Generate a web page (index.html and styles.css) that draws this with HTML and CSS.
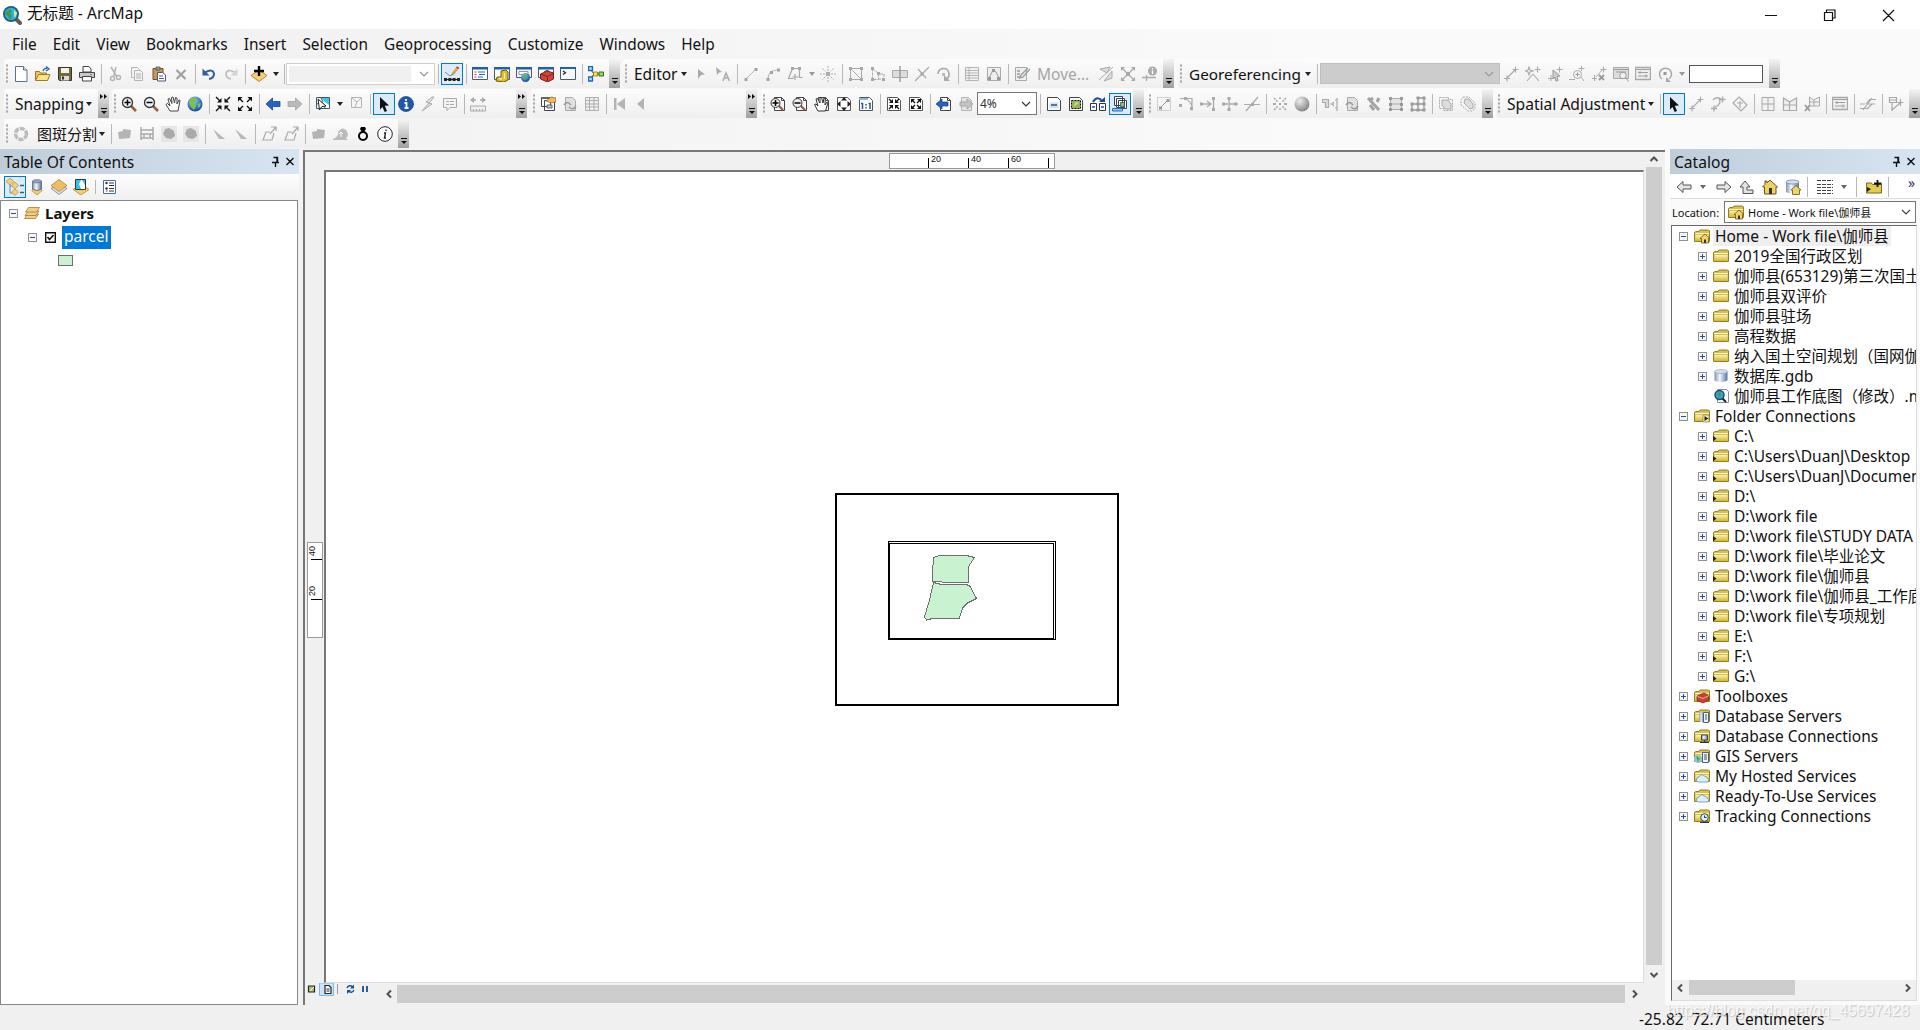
FILE: index.html
```html
<!DOCTYPE html>
<html lang="zh-CN">

<head>
  <meta charset="UTF-8">
  <meta name="viewport" content="width=device-width, initial-scale=1.0">
  <title>无标题 - ArcMap</title>
  <link rel="stylesheet" href="styles.css">
</head>

<body>

  <!-- Icon sprite -->
  <svg class="sprite" xmlns="http://www.w3.org/2000/svg">
    <defs>
      <linearGradient id="gold" x1="0" y1="0" x2="0" y2="1"><stop offset="0" stop-color="#fbf3a8"/><stop offset="1" stop-color="#d3b53c"/></linearGradient>
      <linearGradient id="cyl" x1="0" y1="0" x2="1" y2="0"><stop offset="0" stop-color="#7c93b8"/><stop offset=".4" stop-color="#f4f7fb"/><stop offset="1" stop-color="#5a76a5"/></linearGradient>
      <radialGradient id="ball" cx=".4" cy=".3" r=".7"><stop offset="0" stop-color="#8fd4ff"/><stop offset="1" stop-color="#0d4a9c"/></radialGradient>
      <radialGradient id="greyball" cx=".35" cy=".3" r=".7"><stop offset="0" stop-color="#eee"/><stop offset="1" stop-color="#888"/></radialGradient>
    </defs>

    <!-- Standard -->
    <symbol id="app" viewBox="0 0 20 20"><path d="M12 12l6 6" stroke="#6d5a50" stroke-width="4" stroke-linecap="round"/><circle cx="9" cy="9" r="8" fill="#1d5d82"/><circle cx="9" cy="9" r="6.2" fill="#2fb2dc"/><path d="M5 6l4-2 1 3-2 1 2 3-2 4-2-4-3-2z" fill="#47944a"/><path d="M12 5l3 3-2 5-1-3z" fill="#eadf9a"/></symbol>
    <symbol id="new" viewBox="0 0 16 16"><path d="M2.500.5h8l3.500 3.500v11.500H2.500z" fill="#fff" stroke="#5d7186"/><path d="M10.500.5V4H14" fill="#d8e4f0" stroke="#5d7186"/></symbol>
    <symbol id="open" viewBox="0 0 16 16"><path d="M.5 14V5.500h4l1 1.500h6v2" fill="#e9c75a" stroke="#a07a20"/><path d="M.5 14.500l3-6H15l-2.500 6z" fill="#fbe48c" stroke="#a07a20"/><path d="M8 5q1-3 4-2.500M11 .5l3 2.500-3 2" fill="none" stroke="#2a60b0" stroke-width="1.300"/></symbol>
    <symbol id="save" viewBox="0 0 16 16"><path d="M1.500 1.500h13v13h-12l-1-1z" fill="#756a3b" stroke="#3b3620"/><path d="M4 2h8v5H4z" fill="#f3f3ee"/><path d="M4 10h8v4.500H4z" fill="#ddd"/><path d="M5 10.500h2v3H5z" fill="#333"/></symbol>
    <symbol id="print" viewBox="0 0 16 16"><path d="M4 6V.5h6l2 2.500v3z" fill="#fff" stroke="#444"/><path d="M.5 6.500h15v5H.5z" fill="#c9c9c9" stroke="#444"/><path d="M3.500 10.500h9v4.500h-9z" fill="#fff" stroke="#444"/><path d="M11 8.500h2" stroke="#5a5"/></symbol>
    <symbol id="cut" viewBox="0 0 16 16"><g fill="none" stroke="#b4b4b4" stroke-width="1.500"><path d="M4 1l6 10M9 1l-2.500 10"/><circle cx="5.500" cy="12.500" r="2"/><circle cx="11.500" cy="11.500" r="2"/></g></symbol>
    <symbol id="copy" viewBox="0 0 16 16"><path d="M2.500 1.500h6l2 2v8h-8z" fill="#f4f4f4" stroke="#b4b4b4"/><path d="M5.500 4.500h6l2 2v8h-8zM7 8h5M7 10h5M7 12h5" fill="#f4f4f4" stroke="#b4b4b4"/></symbol>
    <symbol id="paste" viewBox="0 0 16 16"><path d="M2 2.500h10v11H2z" fill="#c8965a" stroke="#70502c"/><path d="M5 1h4v3H5z" fill="#999" stroke="#555" stroke-width=".8"/><path d="M6.500 6.500h5l3 2.500v6h-8zM8 10h4M8 12.500h5" fill="#fff" stroke="#4a5c78"/></symbol>
    <symbol id="delete" viewBox="0 0 16 16"><path d="M3.500 4l9 9M12.500 4l-9 9" stroke="#a0a0a0" stroke-width="2.200"/></symbol>
    <symbol id="undo" viewBox="0 0 16 16"><path d="M4 6.500Q12 2 13 8q0 4-5 5" fill="none" stroke="#2b5f9e" stroke-width="2"/><path d="M1.500 2.500v7h7z" fill="#2b5f9e"/></symbol>
    <symbol id="redo" viewBox="0 0 16 16"><path d="M12 6.500Q4 2 3 8q0 4 5 5" fill="none" stroke="#bdbdbd" stroke-width="1.600"/><path d="M14.500 2.500v7h-7z" fill="#d3d3d3"/></symbol>
    <symbol id="add" viewBox="0 0 16 16"><path d="M8 4l8 5.500L8 15.500 0 9.500z" fill="#f6cf70" stroke="#b78a30"/><path d="M8 0v10M3 5h10" stroke="#000" stroke-width="2.400"/></symbol>
    <symbol id="sketch" viewBox="0 0 16 16"><path d="M1 6l5 4 3-2" fill="none" stroke="#888"/><path d="M7.500 9L8.500 7l4.500-6 1.500 1-4.500 6z" fill="#f2b83c" stroke="#a06a20" stroke-width=".6"/><path d="M13 .2l2.300 1.600-1 1.400-2.300-1.700z" fill="#d34a3c"/><path d="M1 13.500h14" stroke="#222"/><path d="M0 12h3v3H0zM4.300 12h3v3h-3zM8.600 12h3v3h-3zM13 12h3v3h-3z" fill="#222"/></symbol>
    <symbol id="wtoc" viewBox="0 0 16 16"><path d="M.5 1.500h15v12H.5z" fill="#fff" stroke="#4a5a70"/><path d="M0 1h16v2.500H0z" fill="#1f5fb4"/><path d="M2.500 6h2M2.500 8.500h2M2.500 11h2" stroke="#d33"/><path d="M6 6h7M7 8.500h6M6 11h5" stroke="#1d70c8" stroke-width="1.200"/></symbol>
    <symbol id="wcat" viewBox="0 0 16 16"><path d="M.5 1.500h15v12H.5z" fill="#fff" stroke="#4a5a70"/><path d="M0 1h16v2.500H0z" fill="#1f5fb4"/><path d="M7 5l5-1 2 2v8l-4 2-8-1 1-4h4z" fill="#dcbc30" stroke="#6f5b12"/><path d="M10.500 7v6M5 12.500l3 .5" stroke="#fff2a0" stroke-width="1.300"/></symbol>
    <symbol id="wsearch" viewBox="0 0 16 16"><path d="M.5 1.500h15v10H.5z" fill="#f4f4f4" stroke="#4a5a70"/><path d="M0 1h16v2.500H0z" fill="#1f5fb4"/><path d="M3 5.500h9v3H3z" fill="#fff" stroke="#999"/><circle cx="9.500" cy="11.500" r="4.500" fill="url(#ball)"/><path d="M8 8l3 2-2 4-2-3z" fill="#5fb04c"/></symbol>
    <symbol id="wtool" viewBox="0 0 16 16"><path d="M.5 1.500h15v10H.5z" fill="#fff" stroke="#4a5a70"/><path d="M0 1h16v2.500H0z" fill="#1f5fb4"/><path d="M2.500 8l7-3 6 2v6l-6 3-7-3z" fill="#cf4538" stroke="#7c1f18"/><path d="M3 8l6.500 2.500L15 7.500M9.500 10.500V15" fill="none" stroke="#8a1f18"/><path d="M6 6q2-2.500 5-1" fill="none" stroke="#444"/></symbol>
    <symbol id="wpy" viewBox="0 0 16 16"><path d="M.5 1.500h15v12H.5z" fill="#f7fafd" stroke="#4a5a70"/><path d="M0 1h16v2H0z" fill="#1f5fb4"/><path d="M3 5l2.500 1.800L3 8.500" fill="none" stroke="#222" stroke-width="1.200"/></symbol>
    <symbol id="model" viewBox="0 0 16 16"><path d="M3 4l3 4-3 4M8 8h4" fill="none" stroke="#333"/><path d="M.5.5h4v4h-4zM.5 11h4v4h-4z" fill="#a6dcff" stroke="#1b6ab8" stroke-width="1.300"/><path d="M5.500 6h4v4h-4z" fill="#ffe04a" stroke="#8a7a10" stroke-width=".8"/><path d="M11 6h4.500v4H11z" fill="#9ad46a" stroke="#2c6e18"/></symbol>

    <!-- Editor, greyed out -->
    <symbol id="garrow" viewBox="0 0 16 16"><path d="M5 3l7 5.500-4 .5-3 4z" fill="#ababab"/></symbol>
    <symbol id="garrowa" viewBox="0 0 16 16"><path d="M1 1l6 5-3 .5L2 9z" fill="#ababab"/><path d="M8 15l3-8 3.500 8M9 12h4.500" fill="none" stroke="#ababab" stroke-width="1.500"/></symbol>
    <symbol id="gline" viewBox="0 0 16 16"><path d="M3 13L13 3" stroke="#b4b4b4"/><path d="M1.500 12h3v3h-3zM11.500 2h3v3h-3z" fill="#a4a4a4"/></symbol>
    <symbol id="garc" viewBox="0 0 16 16"><path d="M3 13q0-9 10-9" fill="none" stroke="#b4b4b4"/><path d="M1.500 12h3v3h-3zM12 2.500h3v3h-3zM5 5h3v3H5z" fill="#a4a4a4"/></symbol>
    <symbol id="gtrace" viewBox="0 0 16 16"><path d="M5.500 2.500h7v9h3M5.500 2.500l-4 10h5M8 8v6M5.500 11h6" fill="none" stroke="#a8a8a8" stroke-width="1.200"/><path d="M4 1h3v3H4zM11 1h3v3h-3z" fill="#a8a8a8"/></symbol>
    <symbol id="gpoint" viewBox="0 0 16 16"><path d="M8 0v5M8 11v5M0 8h5M11 8h5M2.500 2.500l3 3M10.500 10.500l3 3M13.500 2.500l-3 3M5.500 10.500l-3 3" stroke="#b0b0b0" stroke-dasharray="2 1"/><path d="M6 6h4v4H6z" fill="#aaa"/></symbol>
    <symbol id="gverts" viewBox="0 0 16 16"><path d="M2.500 2.500h11v11h-11zM2.500 2.500l11 11" fill="none" stroke="#aaa"/><path d="M1 1h3v3H1zM12 1h3v3h-3zM1 12h3v3H1zM12 12h3v3h-3z" fill="#a8a8a8"/></symbol>
    <symbol id="greshape" viewBox="0 0 16 16"><path d="M2.500 2.500v11h6M2.500 2.500l6 5v6M8 13h6V8H8" fill="none" stroke="#aaa" stroke-dasharray="3 1"/><path d="M1 1h3v3H1zM7 6h3v3H7zM1 12h3v3H1zM12 12h3v3h-3z" fill="#a8a8a8"/></symbol>
    <symbol id="gcutp" viewBox="0 0 16 16"><path d="M.5 4.500h15v7H.5z" fill="#ddd" stroke="#aaa"/><path d="M8 0v16" stroke="#999" stroke-width="1.400"/></symbol>
    <symbol id="gsplit" viewBox="0 0 16 16"><path d="M1 15L15 1M4 3l8 9" stroke="#aaa" stroke-width="1.200"/><path d="M6.500 6.500h3v3h-3z" fill="#a8a8a8"/></symbol>
    <symbol id="grotate" viewBox="0 0 16 16"><path d="M2 8a5.500 5.500 0 1 1 8 5" fill="none" stroke="#aaa" stroke-width="1.600"/><path d="M8 9v6h6z" fill="#aaa"/><path d="M6 7h3v3H6z" fill="#bbb"/></symbol>
    <symbol id="gtable" viewBox="0 0 16 16"><path d="M1.500 1.500h13v13h-13zM2 4.500h12M2 7h12M2 9.500h12M2 12h12M5 2v12" fill="#f3f3f3" stroke="#b4b4b4"/></symbol>
    <symbol id="gprop" viewBox="0 0 16 16"><path d="M1.500 1.500h13v13h-13z" fill="#eee" stroke="#aaa"/><path d="M3 12l4-8 3 2 3 6" fill="none" stroke="#999"/><path d="M6 3h3v3H6zM2 11h3v3H2zM11 11h3v3h-3z" fill="#999"/></symbol>
    <symbol id="gform" viewBox="0 0 16 16"><path d="M1.500 1.500h11v13h-11z" fill="#eee" stroke="#aaa"/><path d="M3 5h3M3 8h3M3 11h3M7 9l7-7M7 9l-1 3 3-1 7-8" fill="none" stroke="#999" stroke-width="1.300"/></symbol>
    <symbol id="gmap" viewBox="0 0 16 16"><path d="M2 3l10-2-3 6zM6 15l8-3V5zM1 14L15 1" fill="#ddd" stroke="#aaa"/></symbol>
    <symbol id="gexp" viewBox="0 0 16 16"><path d="M2 2l12 12M14 2L2 14" stroke="#aaa" stroke-width="1.300"/><path d="M1 1h4L1 5zM15 1h-4l4 4zM1 15h4l-4-4zM15 15h-4l4-4zM6 6h4v4H6z" fill="#a8a8a8"/></symbol>
    <symbol id="gpin" viewBox="0 0 16 16"><circle cx="10.500" cy="5" r="4.500" fill="#aaa"/><path d="M10.500 2v1.500M10.500 4.500V8" stroke="#fff" stroke-width="1.400"/><path d="M0 11.500h14M4.500 9v6" stroke="#aaa" stroke-width="1.300"/></symbol>
    <symbol id="glink" viewBox="0 0 16 16"><path d="M3 13L13 3M1 12.500h6M4 9.500v6M9.500 3.500h6M12.500.5v6" stroke="#aaa" stroke-width="1.100"/></symbol>
    <symbol id="gwand" viewBox="0 0 16 16"><path d="M2 15l6-7M8 8l6 7M9.500 3.500h6M12.500.5v6M4 1l1 3 3 1-3 1-1 3-1-3-3-1 3-1z" fill="none" stroke="#aaa" stroke-width="1.100"/></symbol>
    <symbol id="gsel" viewBox="0 0 16 16"><path d="M1 12.500h5M4 9v6M9.500 3.500h6M12.500.5v6" stroke="#aaa"/><path d="M6 4l7 6-3 .5 1 4-2 .5-1.500-4L6 13z" fill="#ccc" stroke="#999"/></symbol>
    <symbol id="gzlink" viewBox="0 0 16 16"><path d="M0 13.500h6M9.500 2.500h6M12.500 0v5M12 11l3 4" stroke="#aaa"/><circle cx="8.500" cy="8.500" r="4" fill="#f4f4f4" stroke="#aaa"/><path d="M6.500 8.500h4M8.500 6.500v4" stroke="#999"/></symbol>
    <symbol id="gdlink" viewBox="0 0 16 16"><path d="M1 12.500h5M3.500 9v6M5 11l7-8M9.500 3.500h6M12.500.5v6" stroke="#aaa"/><path d="M8 9l5 5M13 9l-5 5" stroke="#999" stroke-width="1.800"/></symbol>
    <symbol id="gwin" viewBox="0 0 16 16"><path d="M.5 1.500h15v12H.5z" fill="#eee" stroke="#a8a8a8" stroke-width="1.300"/><path d="M1 3.500h14M3 6.500h10M3 10h10M5 5v3M11 8.500v3" stroke="#a0a0a0"/></symbol>
    <symbol id="gwinz" viewBox="0 0 16 16"><path d="M.5 1.500h15v11H.5z" fill="#ddd" stroke="#a8a8a8"/><path d="M1 3.500h14M3 6h10M13 12l2.500 3.500" stroke="#999"/><circle cx="10" cy="9.500" r="3.300" fill="#eee" stroke="#999"/></symbol>
    <symbol id="grot2" viewBox="0 0 16 16"><path d="M5 13A6 6 0 1 1 12 13" fill="none" stroke="#a8a8a8" stroke-width="1.500"/><path d="M9 11v5h5z" fill="#a8a8a8"/><path d="M6.500 6h3v3h-3z" fill="#999"/></symbol>

    <!-- Tools -->
    <symbol id="zin" viewBox="0 0 16 16"><path d="M10 10l5 5" stroke="#9c5f3a" stroke-width="2.600"/><circle cx="6.500" cy="6.500" r="5" fill="#eef4fa" stroke="#333" stroke-width="1.300"/><path d="M3.500 6.500h6M6.500 3.500v6" stroke="#000" stroke-width="1.500"/></symbol>
    <symbol id="zout" viewBox="0 0 16 16"><path d="M10 10l5 5" stroke="#9c5f3a" stroke-width="2.600"/><circle cx="6.500" cy="6.500" r="5" fill="#eef4fa" stroke="#333" stroke-width="1.300"/><path d="M3.500 6.500h6" stroke="#000" stroke-width="1.500"/></symbol>
    <symbol id="pan" viewBox="0 0 16 16"><path d="M5 15L1 8.500l1.500-1L5 10 3 3l1.500-.5L7 7.500 6.500 1.500 8 1l1.500 6L10.500 1.500 12 2v6l2-4 1 .5L13 15z" fill="#fff" stroke="#444"/></symbol>
    <symbol id="globe" viewBox="0 0 16 16"><circle cx="8" cy="8" r="7.500" fill="url(#ball)"/><path d="M4 2l5-.5 1 3L7 7l2 3-2 4-3-3-2-4zM11 8l3-1-1 4-2 1z" fill="#7fc04a"/></symbol>
    <symbol id="fixin" viewBox="0 0 16 16"><g stroke="#111" stroke-width="1.400"><path d="M1 1l4 4M15 1l-4 4M1 15l4-4M15 15l-4-4"/></g><path d="M6.500 2v4.500H2zM9.500 2v4.500H14zM6.500 14V9.500H2zM9.500 14V9.500H14z" fill="#111"/></symbol>
    <symbol id="fixout" viewBox="0 0 16 16"><g stroke="#111" stroke-width="1.400"><path d="M2 2l4 4M14 2l-4 4M2 14l4-4M14 14l-4-4"/></g><path d="M1 1h4.500L1 5.500zM15 1h-4.500L15 5.500zM1 15h4.500L1 10.500zM15 15h-4.500l4.500-4.500z" fill="#111"/></symbol>
    <symbol id="back" viewBox="0 0 16 16"><path d="M1 8l6.500-6v3.500H15v5H7.500V14z" fill="#2563c0" stroke="#1a468a" stroke-width=".8"/></symbol>
    <symbol id="fwd" viewBox="0 0 16 16"><path d="M15 8L8.500 2v3.500H1v5h7.500V14z" fill="#b9b9b9" stroke="#a4a4a4" stroke-width=".8"/></symbol>
    <symbol id="selfeat" viewBox="0 0 16 16"><path d="M1.500 1.500h13v11h-13z" fill="#fff" stroke="#456"/><path d="M6 2h8v7l-4-3z" fill="#35c8e8"/><path d="M2 8l5-2 3 6M6 2l2 4" fill="none" stroke="#456"/><path d="M3 3l8 7-4 .5L4.500 14z" fill="#fff" stroke="#222"/></symbol>
    <symbol id="clearsel" viewBox="0 0 16 16"><path d="M3.500 1.500h10v10h-10zM4 2l5 4 4-4M9 6l-2 5" fill="#f6f6f6" stroke="#b4b4b4"/></symbol>
    <symbol id="ptr" viewBox="0 0 16 16"><path d="M4 1l9 8.500-4.200.3L11 15l-2.300 1L6.500 11 4 13.500z" fill="#111"/></symbol>
    <symbol id="info" viewBox="0 0 16 16"><circle cx="8" cy="8" r="7.500" fill="#1e58b0" stroke="#143f84" stroke-width=".7"/><path d="M8 3v2M6.500 7H8.500v5M6.500 12h4" stroke="#fff" stroke-width="1.800" fill="none"/></symbol>
    <symbol id="gbolt" viewBox="0 0 16 16"><path d="M12 1L6 6l3 1-7 8 10-7-3-1 5-6z" fill="#e4e4e4" stroke="#aaa"/></symbol>
    <symbol id="gpopup" viewBox="0 0 16 16"><path d="M1.500 2.500h13v9H8l-3 3v-3H1.500zM4 5.500h3M4 8.500h3M8 5.500h4M8 8.500h4" fill="#f4f4f4" stroke="#aaa"/></symbol>
    <symbol id="gmeasure" viewBox="0 0 16 16"><path d="M1 4h5M10 4h5" stroke="#aaa" stroke-width="1.500"/><path d="M4 1L0 4l4 3zM12 1l4 3-4 3z" fill="#aaa"/><path d="M.5 10h15v5H.5zM3.500 15v-2M6.500 15v-2M9.500 15v-2M12.500 15v-2" fill="#eee" stroke="#aaa"/></symbol>
    <symbol id="addctl" viewBox="0 0 16 16"><path d="M1.500 1.500h9v9h-9zM4.500 4.500h10v10h-10z" fill="#fff" stroke="#444"/><path d="M1 1h9v2H1z" fill="#666"/><path d="M6 5l5-4 5 1v4l-5 1z" fill="#f0b860" stroke="#8b6120" stroke-width=".7"/><path d="M7 9h5v3H7z" fill="#b8c8d8" stroke="#567"/></symbol>
    <symbol id="gdoc2" viewBox="0 0 16 16"><path d="M3.500 1.500h7l3 3v10h-10z" fill="#e0e0e0" stroke="#aaa"/><path d="M2 9q3-5 7 0M14 10q-3 5-7 1" fill="none" stroke="#999" stroke-width="1.500"/></symbol>
    <symbol id="ggrid" viewBox="0 0 16 16"><path d="M1.500 1.500h13v13h-13zM2 4.500h12M2 8h12M2 11h12M5.500 2v12M10 2v12" fill="#eee" stroke="#b0b0b0"/></symbol>
    <symbol id="gfirst" viewBox="0 0 16 16"><path d="M2 2h2.500v12H2zM13 2v12L5 8z" fill="#b4b4b4"/></symbol>
    <symbol id="gprev" viewBox="0 0 16 16"><path d="M10 2v12L3 8z" fill="#b4b4b4"/></symbol>

    <!-- Layout -->
    <symbol id="page" viewBox="0 0 16 16"><path d="M4.500 1.500h7l3 3v10h-10z" fill="#fff" stroke="#444"/><path d="M11.500 1.500v3h3" fill="none" stroke="#444"/></symbol>
    <symbol id="pzin" viewBox="0 0 16 16"><use href="#page"/><path d="M8 9l5 5" stroke="#9c5f3a" stroke-width="2.400"/><circle cx="5.500" cy="7" r="4.500" fill="#eee" stroke="#333"/><path d="M2.500 7h6M5.500 4v6" stroke="#000" stroke-width="1.500"/></symbol>
    <symbol id="pzout" viewBox="0 0 16 16"><use href="#page"/><path d="M8 9l5 5" stroke="#9c5f3a" stroke-width="2.400"/><circle cx="5.500" cy="7" r="4.500" fill="#eee" stroke="#333"/><path d="M2.500 7h6" stroke="#000" stroke-width="1.500"/></symbol>
    <symbol id="ppan" viewBox="0 0 16 16"><use href="#page"/><path d="M4 15L.5 8.500 2 8l2 2-2-7 1.500-.5L6 7V1.500h1.500L9 7l1-5 1.300.5L11 9l2-3 1 .5L11.500 15z" fill="#fff" stroke="#333"/></symbol>
    <symbol id="pfull" viewBox="0 0 16 16"><path d="M1.500 1.500h10l3 3v10h-13z" fill="#fff" stroke="#555"/><path d="M8 1l3 3.500H5zM8 15l3-3.500H5zM1 8l3.500-3v6zM15 8l-3.500-3v6z" fill="#222"/></symbol>
    <symbol id="pone" viewBox="0 0 16 16"><path d="M1.500 1.500h10l3 3v10h-13z" fill="#fff" stroke="#555"/><path d="M1 2h9v2H1z" fill="#8bb8df"/><path d="M3 7.500h1.500V13M12 13V7.500h-1.500M8 8v1.500M8 11v1.500" fill="none" stroke="#1f5791" stroke-width="1.500"/></symbol>
    <symbol id="pfin" viewBox="0 0 16 16"><path d="M1.500 1.500h10l3 3v10h-13z" fill="#fff" stroke="#555"/><path d="M7 3v4H3zM9 3v4h4zM7 13V9H3zM9 13V9h4z" fill="#111"/><path d="M3 3l3 3M13 3l-3 3M3 13l3-3M13 13l-3-3" stroke="#111" stroke-width="1.300"/></symbol>
    <symbol id="pfout" viewBox="0 0 16 16"><path d="M1.500 1.500h10l3 3v10h-13z" fill="#fff" stroke="#555"/><path d="M3 3h4L3 7zM13 3H9l4 4zM3 13h4L3 9zM13 13H9l4-4z" fill="#111"/><path d="M4 4l3 3M12 4L9 7M4 12l3-3M12 12L9 9" stroke="#111" stroke-width="1.300"/></symbol>
    <symbol id="pback" viewBox="0 0 16 16"><use href="#page"/><path d="M0 8l6-5v3h6v4H6v3z" fill="#2563c0" stroke="#173f7c" stroke-width=".7"/></symbol>
    <symbol id="pfwd" viewBox="0 0 16 16"><path d="M3.500 1.500h7l3 3v10h-10z" fill="#e4e4e4" stroke="#b4b4b4"/><path d="M15 8L9 3v3H2v4h7v3z" fill="#c4c4c4" stroke="#aaa"/></symbol>
    <symbol id="ptog" viewBox="0 0 16 16"><path d="M1.500 1.500h10l3 3v10h-13z" fill="#fff" stroke="#444"/><path d="M3.500 6.500h9v6h-9z" fill="#cfe2f4"/><path d="M5 9h6" stroke="#236" stroke-width="1.300"/></symbol>
    <symbol id="pfocus" viewBox="0 0 16 16"><path d="M1.500 1.500h10l3 3v10h-13z" fill="#fff" stroke="#444"/><path d="M3.500 4.500h9v8h-9z" fill="#8fb65a" stroke="#111" stroke-dasharray="2 1"/><path d="M5 11l3-5 3 1z" fill="#e8d67c"/></symbol>
    <symbol id="pchange" viewBox="0 0 16 16"><path d="M.5 7.500h6v7h-6zM9.500 7.500h6v7h-6z" fill="#fff" stroke="#333"/><path d="M2 10h3v2H2zM11 10h3v2h-3z" fill="#4a80bd"/><path d="M3 6q4-7 9-1" fill="none" stroke="#1d4f90" stroke-width="2"/><path d="M9 6h6V1z" fill="#1d4f90"/></symbol>
    <symbol id="pddp" viewBox="0 0 16 16"><path d="M2.500.5h8v9h-8zM4.500 2.500h8v9h-8zM6.500 4.500h8v8h-8z" fill="#fff" stroke="#345"/><path d="M8.500 6.500h4v4h-4z" fill="#8bbf6a" stroke="#345" stroke-width=".7"/><path d="M.5 12.500h10v2.500H.5z" fill="#8fc0ee" stroke="#2a6fc0"/></symbol>

    <!-- Advanced editing and spatial adjustment -->
    <symbol id="gcopyf" viewBox="0 0 16 16"><path d="M1.500 1.500h13v13h-13z" fill="none" stroke="#aaa" stroke-dasharray="1 1"/><path d="M4 12l8-8" stroke="#999"/><path d="M3 10.500h3v3H3zM10.500 3h3v3h-3z" fill="#999"/></symbol>
    <symbol id="gfillet" viewBox="0 0 16 16"><path d="M2 2.500h12v12M7 2.500q6 3 7 8" fill="none" stroke="#aaa" stroke-width="1.200"/><path d="M1 8h3v3H1zM6 1h3v3H6zM12 11h3v3h-3z" fill="#aaa"/></symbol>
    <symbol id="gextend" viewBox="0 0 16 16"><path d="M1 8h9M13.500 1v14M7 5l4 3-4 3" fill="none" stroke="#aaa" stroke-width="1.300"/><path d="M0 6.500h3v3H0zM12 1h3v3h-3zM12 12h3v3h-3z" fill="#aaa"/></symbol>
    <symbol id="gtrim" viewBox="0 0 16 16"><path d="M0 8h6M7 1v14M7 8h9" fill="none" stroke="#aaa" stroke-width="1.300"/><path d="M0 6.500h3v3H0zM5.500 1h3v3h-3zM5.500 12h3v3h-3zM12 6.500h3v3h-3z" fill="#aaa"/></symbol>
    <symbol id="gint" viewBox="0 0 16 16"><path d="M2 15L14 1M0 8.500h16" stroke="#aaa" stroke-width="1.200"/><path d="M7 7h3v3H7z" fill="#aaa"/></symbol>
    <symbol id="gexplode" viewBox="0 0 16 16"><path d="M2 2l4 4M14 2l-4 4M2 14l4-4M14 14l-4-4M8 1v3M8 12v3" stroke="#aaa" stroke-width="1.500" stroke-dasharray="2 1"/><path d="M7 7h2v2H7zM1 7h3v2H1zM12 7h3v2h-3z" fill="#aaa"/></symbol>
    <symbol id="gball" viewBox="0 0 16 16"><circle cx="8" cy="8" r="7.500" fill="url(#greyball)"/></symbol>
    <symbol id="gcon" viewBox="0 0 16 16"><path d="M.5 3.500h6v8h-3v-5h-3zM8 8h3M13 4h2M13 12h2M15 2v13M12 6L10 8l2 2" fill="#ddd" stroke="#aaa" stroke-width="1.200"/></symbol>
    <symbol id="gtools" viewBox="0 0 16 16"><path d="M2 2l11 12M13 2l-2 4M3 5l4-3M4 9l4 5" stroke="#a4a4a4" stroke-width="3"/></symbol>
    <symbol id="gbox" viewBox="0 0 16 16"><path d="M2.500 2.500h11v11h-11zM2 8h12" fill="#e4e4e4" stroke="#aaa"/><path d="M1 1h3v3H1zM12 1h3v3h-3zM1 7h3v3H1zM12 7h3v3h-3zM1 12h3v3H1zM12 12h3v3h-3z" fill="#999"/></symbol>
    <symbol id="gnodes" viewBox="0 0 16 16"><path d="M8 2h6v12H2V8h12M8 2v12" fill="none" stroke="#999" stroke-width="1.300"/><path d="M6.500.5h3v3h-3zM12.500.5h3v3h-3zM.5 6.500h3v3h-3zM6.500 6.500h3v3h-3zM12.500 6.500h3v3h-3zM.5 12.500h3v3h-3zM6.500 12.500h3v3h-3zM12.500 12.500h3v3h-3z" fill="#999"/></symbol>
    <symbol id="gunion" viewBox="0 0 16 16"><path d="M1.500 1.500h9v2h4v11h-9v-2h-4z" fill="none" stroke="#aaa" stroke-dasharray="2 1"/><path d="M4 4h6l3 4v5H7L4 9z" fill="#ddd" stroke="#aaa"/></symbol>
    <symbol id="gclip" viewBox="0 0 16 16"><path d="M3 1h6l6 6v6l-3 2H8L1 9V4z" fill="none" stroke="#aaa" stroke-dasharray="2 1"/><path d="M5 3h4l4 5v4l-3 1-6-6z" fill="#ddd" stroke="#aaa"/></symbol>
    <symbol id="gmulti" viewBox="0 0 16 16"><path d="M1 12.500h6M4 9.500v6M5 11q7-3 4-8M9.500 3.500h6M12.500.5v6M3 4q3-4 8-1" fill="none" stroke="#aaa" stroke-width="1.300"/></symbol>
    <symbol id="gdiam" viewBox="0 0 16 16"><path d="M7 1l8 8-6 6-8-8zM5 7h6M8 5v7" fill="none" stroke="#aaa" stroke-width="1.200"/></symbol>
    <symbol id="gcells" viewBox="0 0 16 16"><path d="M2 1.500h12v13H2zM2 8h12M8 2v12" fill="#f0f0f0" stroke="#aaa"/></symbol>
    <symbol id="gcells2" viewBox="0 0 16 16"><path d="M1.500 2l6 4 7-4v12.500h-13zM1.500 9h13M7.500 6v8" fill="#f0f0f0" stroke="#aaa" stroke-width="1.200"/></symbol>
    <symbol id="gcells3" viewBox="0 0 16 16"><path d="M5.500 1l4 3 6-3v9h-10zM5.500 6h10M10 4v6" fill="#f0f0f0" stroke="#aaa"/><path d="M1 9l5 6M6 9l-5 6" stroke="#999" stroke-width="1.800"/></symbol>
    <symbol id="gedge" viewBox="0 0 16 16"><path d="M9 3.500h7M0 8h5M8 8h7M0 12.500h7M3 14l9-12M6 8l4-5M7 13l5-5" stroke="#aaa" stroke-width="1.200"/></symbol>
    <symbol id="gattr" viewBox="0 0 16 16"><path d="M1.500 1.500h7v5h-7zM2 4h6M4 7v8M4 14l8-7M9.500 6.500h6M12.500 3v7" fill="none" stroke="#aaa" stroke-width="1.200"/></symbol>

    <!-- Parcel split add-in -->
    <symbol id="gring" viewBox="0 0 16 16"><circle cx="8" cy="8" r="5.500" fill="none" stroke="#bdbdbd" stroke-width="3.500" stroke-dasharray="5 1"/></symbol>
    <symbol id="gpoly" viewBox="0 0 16 16"><path d="M1 6l5-1V3l8 1-1 8-11 1z" fill="#b4b4b4"/></symbol>
    <symbol id="gladder" viewBox="0 0 16 16"><path d="M2 1v13M14 1v13M2 4h12M2 8h12M2 12h12M5 8v4M11 8v4" stroke="#aaa" stroke-width="1.500"/></symbol>
    <symbol id="gblob" viewBox="0 0 16 16"><path d="M0 0h16v16H0z" fill="#e6e6e6"/><path d="M8 2l5 3 1 5-4 3-5-1-3-4 2-5z" fill="#aaa"/></symbol>
    <symbol id="gtri" viewBox="0 0 16 16"><path d="M2 3l12 10H8z" fill="#b8b8b8"/></symbol>
    <symbol id="gpenp" viewBox="0 0 16 16"><path d="M9 6H5l-3 8h9l2-7M9 8l6-7M10 1h5v4" fill="none" stroke="#aaa" stroke-width="1.200"/></symbol>
    <symbol id="gleaf" viewBox="0 0 16 16"><path d="M0 13q6-2 5-7 4-6 8-2 4 5 0 8l2 2H0z" fill="#bbb"/><path d="M8 11V6l-2 2M8 6l2 2" stroke="#fff" fill="none"/></symbol>
    <symbol id="kring" viewBox="0 0 16 16"><circle cx="8" cy="10" r="4" fill="none" stroke="#000" stroke-width="2"/><path d="M6 1h4l1 2-2 3H7L5 3z" fill="#000"/></symbol>
    <symbol id="kinfo" viewBox="0 0 16 16"><circle cx="8" cy="8" r="7.300" fill="#fff" stroke="#223"/><path d="M9 3.500v1.500M7 7h1.500L7.500 12H9" stroke="#223" stroke-width="1.400" fill="none"/></symbol>

    <!-- Table of contents -->
    <symbol id="tlist" viewBox="0 0 18 18"><path d="M4 4v11h6M4 8h5" fill="none" stroke="#789"/><path d="M4 0l4 3.500L4 7 0 3.500zM9 4l3.500 3.500L9 11 5.500 7.500zM9 11l3.500 3L9 17.500 5.500 14z" fill="#f2cd7c" stroke="#c39840" stroke-width=".8"/><path d="M14 7.500h4M14 14.500h4" stroke="#1d62a8" stroke-width="1.500"/></symbol>
    <symbol id="tsrc" viewBox="0 0 16 18"><path d="M8 8l6 5-6 5-6-5z" fill="#f2cd6c" stroke="#b68a30" stroke-width=".8"/><path d="M3 2.500v9q5 3 10 0v-9z" fill="url(#cyl)" stroke="#667"/><ellipse cx="8" cy="2.500" rx="5" ry="2" fill="#8ea2bf" stroke="#667" stroke-width=".6"/></symbol>
    <symbol id="tvis" viewBox="0 0 16 16"><path d="M0 9.500l8 6 8-6-8-5z" fill="#ddd" stroke="#777" stroke-width=".7"/><path d="M8 .5l8 6-8 6-8-6z" fill="#eebe62" stroke="#a97b28" stroke-width=".7"/></symbol>
    <symbol id="tsel" viewBox="0 0 16 16"><path d="M8 5l8 5.500-8 5.500-8-5.500z" fill="#f2cd6c" stroke="#b68a30" stroke-width=".8"/><path d="M2.500.5h10v10h-10z" fill="#fff" stroke="#333"/><path d="M3 1h5L6 5l2 5H3zM12 1v5L9 1z" fill="#30c4e6"/></symbol>
    <symbol id="topt" viewBox="0 0 16 16"><path d="M2.500 1.500h12v13h-12z" fill="#fff" stroke="#456f9e"/><circle cx="5.500" cy="4" r="1.200" fill="#333"/><circle cx="5.500" cy="9.500" r="1.200" fill="#333"/><path d="M8 4h5M8 6.500h5M8 9.500h5M8 12h5M5 12h1.500" stroke="#333"/></symbol>
    <symbol id="layers" viewBox="0 0 16 14"><g fill="#f0cf86" stroke="#a87a30" stroke-width=".8"><path d="M.5 12.500l3-4.500h11l-3 4.500z"/><path d="M1 9.500L4 5h11l-3 4.500z"/><path d="M1.500 6l3-4.500h11L12.500 6z"/></g></symbol>

    <!-- Catalog -->
    <symbol id="folder" viewBox="0 0 16 14"><path d="M.5 12.500V3.500l1.500-1h3l1-1.500h8.500l1 1v10.500z" fill="#d8bf54" stroke="#94801f"/><path d="M1.500 6h13v6h-13z" fill="url(#gold)"/><path d="M1 4.500h14" stroke="#fdf8cc"/></symbol>
    <symbol id="fconn" viewBox="0 0 16 14"><use href="#folder"/><path d="M0 7l3.500 2.500L0 12.500z" fill="#222"/></symbol>
    <symbol id="froot" viewBox="0 0 16 14"><use href="#folder"/><path d="M9 6h6v7H9z" fill="#f7f3cf" stroke="#887722" stroke-width=".7"/><path d="M10.500 7l4 2.500-4 2.500z" fill="#222"/></symbol>
    <symbol id="fhome" viewBox="0 0 16 14"><use href="#folder"/><path d="M6 9.500l5-4.500 5 4.500h-1.500V14h-7V9.500z" fill="#f0d468" stroke="#6a5614" stroke-width=".8"/><path d="M10 10.500h2V14h-2z" fill="#333"/></symbol>
    <symbol id="ftool" viewBox="0 0 16 14"><use href="#folder"/><path d="M3 7l7-3 5 2.500v4.500l-6 3-6-2.500z" fill="#cb4034" stroke="#7c1f18" stroke-width=".7"/><path d="M3.500 7.500L9 9.500l6-3" fill="none" stroke="#f2b0a6"/></symbol>
    <symbol id="fserv" viewBox="0 0 16 14"><use href="#folder"/><path d="M5.500 4h4v9h-4z" fill="url(#cyl)"/><path d="M9.500 3.500h5v10h-5z" fill="#f2f6fa" stroke="#4a5f80"/><path d="M11 6h2M11 8h2M11 10h2" stroke="#357"/></symbol>
    <symbol id="fdbc" viewBox="0 0 16 14"><use href="#folder"/><path d="M7.500 6h6v5h-6z" fill="url(#cyl)" stroke="#445"/><path d="M6 13.500h9M10.500 11v2.500" stroke="#334"/></symbol>
    <symbol id="fgis" viewBox="0 0 16 14"><use href="#folder"/><path d="M8.500 3.500h6v10h-6z" fill="#f2f6fa" stroke="#4a5f80"/><path d="M10 6h3M10 8h3M10 10h3" stroke="#357"/><circle cx="4" cy="10" r="4" fill="#8ec8c8"/><path d="M2 7l4 2-2 4z" fill="#5aa04a"/></symbol>
    <symbol id="fcloud" viewBox="0 0 16 14"><use href="#folder"/><path d="M4 13q-3-1-1-4 1-1 2-1 2-4 5-1 3 0 3 2 3 1 1 4z" fill="#dcedfb" stroke="#6b8db4" stroke-width=".8"/></symbol>
    <symbol id="ftrack" viewBox="0 0 16 14"><use href="#folder"/><circle cx="10.500" cy="8.500" r="3.800" fill="#dcedfb" stroke="#345"/><path d="M10.500 6.500v2h2M6 13.500h9" stroke="#234" fill="none"/></symbol>
    <symbol id="gdb" viewBox="0 0 16 14"><path d="M1.500 2.500v9q6 3.500 13 0v-9z" fill="url(#cyl)"/><ellipse cx="8" cy="2.500" rx="6.500" ry="2" fill="#d5deea" stroke="#8a9cb8" stroke-width=".6"/></symbol>
    <symbol id="mxd" viewBox="0 0 16 14"><path d="M4.500.5h9l2 2v11h-11z" fill="#fff" stroke="#88a"/><circle cx="6.500" cy="6" r="4.500" fill="#38a4d0" stroke="#174e78" stroke-width="1.500"/><path d="M4 5l3-2 1 3-2 3z" fill="#4a9a4a"/><path d="M9.500 9.500l3.500 3.500" stroke="#222" stroke-width="2"/></symbol>
    <symbol id="cback" viewBox="0 0 16 16"><path d="M1 8l6-5.500V6h8v4H7v3.500z" fill="#e4e4e4" stroke="#555"/></symbol>
    <symbol id="cfwd" viewBox="0 0 16 16"><path d="M15 8L9 2.500V6H1v4h8v3.500z" fill="#e4e4e4" stroke="#555"/></symbol>
    <symbol id="cup" viewBox="0 0 16 16"><path d="M1 8l5-6 5 6H8v3h6v3.500H4V8z" fill="#e4e4e4" stroke="#555"/></symbol>
    <symbol id="chome" viewBox="0 0 16 16"><path d="M.5 8L3 5.500V2h2v2l3-3 7.500 7H14v7H2.500V8z" fill="#eed068" stroke="#6a5614"/><path d="M7 9h3v6H7z" fill="#333"/></symbol>
    <symbol id="cgdb" viewBox="0 0 16 16"><path d="M1 3v10q5 3 13 0V3z" fill="url(#cyl)"/><ellipse cx="7.500" cy="3" rx="6.500" ry="2" fill="#d5deea" stroke="#8a9cb8"/><path d="M6 11l5-4.500 5 4.500h-1.500v4.500h-7V11z" fill="#f0d468" stroke="#6a5614" stroke-width=".8"/></symbol>
    <symbol id="cview" viewBox="0 0 16 16"><path d="M0 1.500h16M0 5.500h16M0 8.500h16M0 11.500h16M0 14.500h16" stroke="#444" stroke-dasharray="4 1"/></symbol>
    <symbol id="cnew" viewBox="0 0 16 16"><path d="M.5 14V4h5l1 1.500h9V14z" fill="#e6cb52" stroke="#7c6a18"/><path d="M1 8l4 2-4 3z" fill="#222"/><path d="M11.500 1v7M8 4.500h7.500" stroke="#111" stroke-width="1.800"/></symbol>
  </svg>

  <!-- Title Bar -->
  <div class="titlebar">
    <svg class="app-icon"><use href="#app"/></svg>
    <span class="app-title">无标题 - ArcMap</span>
    <svg class="window-buttons" width="140" height="14" viewBox="0 0 140 14">
      <path d="M1 7.500h12M60.500 4.500h8v8h-8zM62.500 4v-2h8.500v8h-2M119 2l11 11M130 2l-11 11" fill="none" stroke="#111" stroke-width="1.200"/>
    </svg>
  </div>

  <!-- Menu -->
  <nav class="menu">
    <span>File</span><span>Edit</span><span>View</span><span>Bookmarks</span><span>Insert</span><span>Selection</span><span>Geoprocessing</span><span>Customize</span><span>Windows</span><span>Help</span>
  </nav>

  <!-- Toolbars: icons are filled in by the script from data-items -->
  <div class="toolbar-row">
    <div class="toolbar standard" data-items="new open save print | cut copy paste delete | undo redo | add v | combo:basemap | sketch* | wtoc wcat wsearch wtool wpy | model"></div>
    <div class="toolbar editor" data-items="label:Editor garrow garrowa | gline garc gtrace v gpoint | gverts greshape gcutp gsplit grotate | gtable gprop | gform text:Move... gmap gexp gpin"></div>
    <div class="toolbar georef" data-items="label:Georeferencing | combo:raster glink gwand gsel gzlink gdlink gwinz gwin grot2 v input"></div>
  </div>
  <div class="toolbar-row">
    <div class="toolbar snapping more" data-items="label:Snapping"></div>
    <div class="toolbar tools more" data-items="zin zout pan globe | fixin fixout | back fwd | selfeat v clearsel | ptr* info gbolt gpopup | gmeasure"></div>
    <div class="toolbar context more" data-items="addctl gdoc2 ggrid | gfirst gprev"></div>
    <div class="toolbar layout" data-items="pzin pzout ppan pfull pone | pfin pfout | pback pfwd combo:zoom | ptog pfocus pchange pddp*"></div>
    <div class="toolbar advanced" data-items="gcopyf gfillet gextend gtrim gint | gexplode gball | gcon gdoc2 gtools gbox gnodes | gunion gclip"></div>
    <div class="toolbar spatial" data-items="label:Spatial_Adjustment | ptr* glink gmulti gdiam | gcells gcells2 gcells3 | gwin | gedge | gattr"></div>
  </div>
  <div class="toolbar-row">
    <div class="toolbar parcelsplit" data-items="gring label:图斑分割 | gpoly gladder gblob gblob | gtri gtri | gpenp gpenp | gpoly gleaf kring kinfo"></div>
  </div>

  <main>
    <!-- Table Of Contents -->
    <section class="toc">
      <h2 class="panel-title">Table Of Contents
        <svg width="24" height="12" viewBox="0 0 24 12"><path d="M2.500 1.500h4v5M1 6.500h7M4.500 7v4M6 1.500v5M15.500 2l7 7M22.500 2l-7 7" fill="none" stroke="#111" stroke-width="1.400"/></svg>
      </h2>
      <div class="toc-tools">
        <span class="btn active"><svg class="ico big"><use href="#tlist"/></svg></span>
        <span class="btn"><svg class="ico"><use href="#tsrc"/></svg></span>
        <span class="btn"><svg class="ico"><use href="#tvis"/></svg></span>
        <span class="btn"><svg class="ico"><use href="#tsel"/></svg></span>
        <i class="sep"></i>
        <span class="btn"><svg class="ico"><use href="#topt"/></svg></span>
      </div>
      <div class="toc-tree">
        <div class="toc-row"><i class="exp minus"></i><svg class="ico"><use href="#layers"/></svg><b>Layers</b></div>
        <div class="toc-row child"><i class="exp minus"></i><svg class="check" viewBox="0 0 11 11"><path d="M.7.7h9.600v9.600H.7z" fill="#fff" stroke="#111" stroke-width="1.400"/><path d="M2.500 5l2 2.500 4-4.500" fill="none" stroke="#111" stroke-width="1.600"/></svg><span class="selected">parcel</span></div>
        <div class="swatch"></div>
      </div>
    </section>

    <!-- Layout View -->
    <section class="view">
      <div class="ruler-top">
        <div class="ruler-box"><i>20</i><i>40</i><i>60</i><i></i></div>
      </div>
      <div class="view-body">
        <div class="ruler-left">
          <div class="ruler-box"><i>40</i><i>20</i></div>
        </div>
        <div class="canvas">
          <svg class="sheet" width="284" height="213" viewBox="0 0 284 213" shape-rendering="crispEdges">
            <path d="M1 1h282v211H1z" fill="#fff" stroke="#000" stroke-width="2"/>
            <path d="M53.500 48.500h167v98h-167z" fill="#fff" stroke="#000"/>
            <path d="M54.500 50.500h164v95h-164z" fill="#fff" stroke="#000"/>
            <path d="M98.500 64.500l6-2h27l8 2-6 9v16h-25l-4-1.500h-7v-10l1-12z" fill="#c9f2d0" stroke="#6e6e6e"/>
            <path d="M98.500 89.500l6 1.500h24l6 1.500 7 13-9 4.500-5 5-3 10h-25l-8 2-2-3 5-17z" fill="#c9f2d0" stroke="#6e6e6e"/>
          </svg>
        </div>
        <div class="vscroll">
          <svg width="10" height="8" viewBox="0 0 10 8"><path d="M1.500 6L5 2.500 8.500 6" fill="none" stroke="#505050" stroke-width="2"/></svg>
          <div class="thumb"></div>
          <svg width="10" height="8" viewBox="0 0 10 8"><path d="M1.500 2L5 5.500 8.500 2" fill="none" stroke="#505050" stroke-width="2"/></svg>
        </div>
      </div>
      <div class="view-foot">
        <svg class="view-tabs" width="70" height="14" viewBox="0 0 70 14">
          <path d="M14.500 0h14v12.500h-14z" fill="#cce4f7" stroke="#7ab8ea"/>
          <path d="M3.500 3h6v6h-6z" fill="#a9c96a" stroke="#222" stroke-width="1.200"/><path d="M5 8l4-4" stroke="#fff"/>
          <path d="M20 2.500h4l2 2v6h-6zM21.500 6h3M21.500 8h3" fill="#fff" stroke="#222" stroke-width="1.200"/>
          <path d="M32.500 1v10" stroke="#999"/>
          <path d="M42 5q2-4 6-1M49 7q-2 4-6 1" fill="none" stroke="#164f93" stroke-width="1.400"/><path d="M49 1.500v4h-4zM42 11V7h4z" fill="#164f93"/>
          <path d="M58 3v6M62 3v6" stroke="#164f93" stroke-width="1.800"/>
        </svg>
        <svg width="8" height="10" viewBox="0 0 8 10"><path d="M6 1.500L2.500 5 6 8.500" fill="none" stroke="#505050" stroke-width="2"/></svg>
        <div class="thumb"></div>
        <svg width="8" height="10" viewBox="0 0 8 10"><path d="M2 1.500L5.500 5 2 8.500" fill="none" stroke="#505050" stroke-width="2"/></svg>
      </div>
    </section>

    <!-- Catalog -->
    <section class="catalog">
      <h2 class="panel-title">Catalog
        <svg width="24" height="12" viewBox="0 0 24 12"><path d="M2.500 1.500h4v5M1 6.500h7M4.500 7v4M6 1.500v5M15.500 2l7 7M22.500 2l-7 7" fill="none" stroke="#111" stroke-width="1.400"/></svg>
      </h2>
      <div class="catalog-tools">
        <svg class="ico"><use href="#cback"/></svg>
        <i class="caret"></i>
        <svg class="ico"><use href="#cfwd"/></svg>
        <svg class="ico"><use href="#cup"/></svg>
        <svg class="ico"><use href="#chome"/></svg>
        <svg class="ico"><use href="#cgdb"/></svg>
        <i class="sep"></i>
        <svg class="ico"><use href="#cview"/></svg>
        <i class="caret"></i>
        <i class="sep"></i>
        <svg class="ico"><use href="#cnew"/></svg>
        <i class="sep"></i>
        <span class="chevrons">»</span>
      </div>
      <div class="location">
        <span>Location:</span>
        <div class="location-box">
          <svg class="ico"><use href="#fhome"/></svg>
          <span>Home - Work file\伽师县</span>
          <svg width="10" height="6" viewBox="0 0 10 6"><path d="M1 1l4 4 4-4" fill="none" stroke="#444" stroke-width="1.200"/></svg>
        </div>
      </div>
      <div class="catalog-frame">
        <div class="catalog-tree" id="catalogTree"></div>
        <div class="catalog-scroll">
          <svg width="8" height="10" viewBox="0 0 8 10"><path d="M6 1.500L2.500 5 6 8.500" fill="none" stroke="#505050" stroke-width="2"/></svg>
          <div class="thumb"></div>
          <svg width="8" height="10" viewBox="0 0 8 10"><path d="M2 1.500L5.500 5 2 8.500" fill="none" stroke="#505050" stroke-width="2"/></svg>
        </div>
      </div>
    </section>
  </main>

  <!-- Status Bar -->
  <footer>
    <span class="coords">-25.82&nbsp; 72.71 Centimeters</span>
    <span class="watermark">https://blog.csdn.net/qq_45697428</span>
  </footer>

  <script>
    const chevron = '<svg width="10" height="6" viewBox="0 0 10 6"><path d="M1 1l4 4 4-4" fill="none" stroke="currentColor" stroke-width="1.200"/></svg>';
    const moreMark = '<svg width="7" height="5" viewBox="0 0 7 5"><path d="M0 0l3 2.500L0 5zM4 0l3 2.500L4 5z" fill="#111"/></svg>';

    // Turn one word of data-items into markup
    function renderItem(item) {
      if (item === '|') return '<i class="sep"></i>';
      if (item === 'v') return '<span class="drop"><i class="caret"></i></span>';
      if (item === 'input') return '<span class="input"></span>';
      const [kind, value] = item.split(':');
      if (kind === 'label') return `<span class="label"><span>${value.replace('_', ' ')}</span><i class="caret"></i></span>`;
      if (kind === 'text') return `<span class="move">${value}</span>`;
      if (kind === 'combo') return `<span class="combo ${value}"><b>${value === 'zoom' ? '4%' : ''}</b>${chevron}</span>`;
      const active = item.endsWith('*');
      const name = item.replace('*', '');
      return `<span class="btn${active ? ' active' : ''}"><svg class="ico"><use href="#${name}"/></svg></span>`;
    }

    document.querySelectorAll('.toolbar').forEach(bar => {
      const items = bar.dataset.items.split(' ').map(renderItem).join('');
      const more = bar.classList.contains('more') ? moreMark : '';
      bar.innerHTML = `<i class="grip"></i>${items}<i class="end">${more}</i>`;
    });

    // Catalog entries: [level, expander, icon, text]
    const entries = [
      [0, 'minus', 'fhome', 'Home - Work file\\伽师县'],
      [1, 'plus', 'folder', '2019全国行政区划'],
      [1, 'plus', 'folder', '伽师县(653129)第三次国土'],
      [1, 'plus', 'folder', '伽师县双评价'],
      [1, 'plus', 'folder', '伽师县驻场'],
      [1, 'plus', 'folder', '高程数据'],
      [1, 'plus', 'folder', '纳入国土空间规划（国网伽'],
      [1, 'plus', 'gdb', '数据库.gdb'],
      [1, 'none', 'mxd', '伽师县工作底图（修改）.mxd'],
      [0, 'minus', 'froot', 'Folder Connections'],
      [1, 'plus', 'fconn', 'C:\\'],
      [1, 'plus', 'fconn', 'C:\\Users\\DuanJ\\Desktop'],
      [1, 'plus', 'fconn', 'C:\\Users\\DuanJ\\Documents'],
      [1, 'plus', 'fconn', 'D:\\'],
      [1, 'plus', 'fconn', 'D:\\work file'],
      [1, 'plus', 'fconn', 'D:\\work file\\STUDY DATA'],
      [1, 'plus', 'fconn', 'D:\\work file\\毕业论文'],
      [1, 'plus', 'fconn', 'D:\\work file\\伽师县'],
      [1, 'plus', 'fconn', 'D:\\work file\\伽师县_工作底'],
      [1, 'plus', 'fconn', 'D:\\work file\\专项规划'],
      [1, 'plus', 'fconn', 'E:\\'],
      [1, 'plus', 'fconn', 'F:\\'],
      [1, 'plus', 'fconn', 'G:\\'],
      [0, 'plus', 'ftool', 'Toolboxes'],
      [0, 'plus', 'fserv', 'Database Servers'],
      [0, 'plus', 'fdbc', 'Database Connections'],
      [0, 'plus', 'fgis', 'GIS Servers'],
      [0, 'plus', 'fcloud', 'My Hosted Services'],
      [0, 'plus', 'fcloud', 'Ready-To-Use Services'],
      [0, 'plus', 'ftrack', 'Tracking Connections']
    ];

    document.getElementById('catalogTree').innerHTML = entries.map(([level, exp, icon, text]) =>
      `<div class="entry level${level}"><i class="exp ${exp}"></i><svg class="ico"><use href="#${icon}"/></svg><span>${text}</span></div>`
    ).join('');
  </script>
</body>

</html>
```
FILE: styles.css
```css
/* Global Styling */
* {
  box-sizing: border-box;
}

body {
  margin: 0;
  width: 1920px;
  height: 1030px;
  overflow: hidden;
  display: flex;
  flex-direction: column;
  font-family: "Noto Sans", "Noto Sans CJK SC", sans-serif;
  font-size: 15.5px;
  color: #111;
  background: linear-gradient(90deg, #f0f0f0, #fafafa 70%, #fafafa);
}

i {
  font-style: normal;
}

.sprite {
  position: absolute;
  width: 0;
  height: 0;
}

.ico {
  width: 16px;
  height: 16px;
  flex: none;
}

/* Title Bar */
.titlebar {
  height: 29px;
  flex: none;
  display: flex;
  align-items: center;
  background: #fff;
  padding-left: 2px;
}

.app-icon {
  width: 20px;
  height: 20px;
}

.app-title {
  margin: -4px 0 0 5px;
  font-size: 15.6px;
}

.window-buttons {
  margin-left: auto;
  margin-right: 16px;
}

/* Menu */
.menu {
  height: 30px;
  flex: none;
  display: flex;
  align-items: center;
  padding-left: 12px;
  gap: 16px;
  font-size: 15.4px;
}

/* Toolbars */
.toolbar-row {
  height: 30px;
  flex: none;
  display: flex;
}

.toolbar {
  height: 29px;
  display: flex;
  align-items: center;
  flex: none;
  background: linear-gradient(#fcfcfc, #efefef);
  border-radius: 3px 0 0 3px;
}

.standard { margin-left: 4px; width: 616px; }
.editor { margin-left: 3px; width: 551px; }
.georef { margin-left: 4px; width: 602px; }
.snapping { margin-left: 4px; width: 105px; }
.tools { margin-left: 3px; width: 415px; }
.context { margin-left: 4px; width: 226px; }
.layout { margin-left: 4px; width: 383px; }
.advanced { margin-left: 3px; width: 346px; }
.spatial { margin-left: 3px; width: 424px; }
.parcelsplit { margin-left: 4px; width: 405px; }

.grip {
  width: 6px;
  height: 19px;
  flex: none;
  background: radial-gradient(circle at 2px 1.5px, #aaa 1px, transparent 1.3px) 1px 0 / 5px 4px repeat-y;
}

.btn {
  width: 22px;
  height: 22px;
  flex: none;
  display: flex;
  align-items: center;
  justify-content: center;
}

.btn.active {
  border: 1px solid #0078d7;
  background: #dcebf8;
}

.sep {
  width: 6px;
  height: 20px;
  flex: none;
  background: linear-gradient(#b8b8b8, #b8b8b8) 3px 0 / 1px 100% no-repeat;
}

.caret {
  border: 3px solid transparent;
  border-top: 4px solid #222;
  border-bottom: 0;
}

.drop {
  width: 11px;
  display: flex;
  justify-content: center;
}

.editor .drop .caret,
.georef .drop .caret {
  border-top-color: #999;
}

.label {
  display: flex;
  align-items: center;
  justify-content: space-between;
  flex: none;
  white-space: nowrap;
  padding: 0 3px 0 5px;
}

.editor .label { width: 61px; }
.georef .label { width: 130px; font-size: 15.3px; }
.snapping .label { width: 85px; }
.spatial .label { width: 155px; font-size: 15.6px; }
.parcelsplit .label { width: 76px; font-size: 15px; }

.move {
  width: 62px;
  padding-left: 4px;
  color: #a6a6a6;
}

.combo {
  flex: none;
  height: 22px;
  display: flex;
  align-items: center;
  justify-content: space-between;
  border: 1px solid #d0d0d0;
  background: #fff;
  color: #999;
  padding: 0 5px 0 2px;
}

.combo b {
  font-weight: normal;
  font-size: 12px;
}

.basemap { width: 149px; margin-left: -1px; }
.basemap b { width: 122px; height: 16px; background: #f0f0f0; }
.raster { width: 180px; background: #ccc; border-color: #bfbfbf; height: 21px; }
.zoom { width: 60px; height: 23px; border-color: #777; color: #333; }

.input {
  width: 74px;
  height: 18px;
  margin-left: 2px;
  border: 1px solid #555;
  background: #fff;
}

.end {
  width: 11px;
  height: 29px;
  flex: none;
  margin-left: auto;
  background: linear-gradient(#f4f4f4, #a0a0a0);
  position: relative;
}

.end svg {
  display: block;
  margin: 5px 0 0 2px;
}

.end::before {
  content: "";
  position: absolute;
  left: 3px;
  top: 19px;
  width: 6px;
  height: 1px;
  background: #111;
}

.end::after {
  content: "";
  position: absolute;
  left: 3px;
  top: 22px;
  border: 3px solid transparent;
  border-top-color: #111;
  border-bottom: 0;
}

/* Main Layout */
main {
  height: 856px;
  flex: none;
  display: flex;
}

.panel-title {
  margin: 0;
  height: 25px;
  display: flex;
  align-items: center;
  justify-content: space-between;
  padding: 0 4px;
  font-size: 15.6px;
  font-weight: normal;
  background: linear-gradient(90deg, #bfcddb, #d7e4f2);
}

/* Table Of Contents */
.toc {
  width: 299px;
  display: flex;
  flex-direction: column;
}

.toc-tools {
  height: 26px;
  display: flex;
  align-items: center;
  padding-left: 4px;
  background: linear-gradient(#fdfdfd, #f0f0f0);
}

.toc-tools .sep {
  height: 14px;
}

.ico.big {
  width: 18px;
  height: 18px;
}

.toc-tree {
  width: 298px;
  flex: 1;
  background: #fff;
  border: 1px solid #828790;
  padding-left: 8px;
}

.toc-row {
  height: 24px;
  display: flex;
  align-items: center;
}

.toc-row .ico {
  margin: 0 5px 0 6px;
}

.toc-row b {
  font-size: 15px;
}

.toc-row.child {
  padding-left: 19px;
}

.check {
  width: 11px;
  height: 11px;
  margin: 0 6px 0 8px;
}

.selected {
  height: 23px;
  line-height: 21px;
  padding: 0 2px;
  color: #fff;
  background: #0078d7;
}

.swatch {
  width: 15px;
  height: 11px;
  margin: 6px 0 0 49px;
  border: 1px solid #6e6e6e;
  background: #c9f2d0;
}

.exp {
  width: 9px;
  height: 9px;
  flex: none;
  border: 1px solid #919191;
  background: linear-gradient(#2b4e9b, #2b4e9b) 1px 3px / 5px 1px no-repeat, #f6f6f6;
}

.exp.plus {
  background: linear-gradient(#2b4e9b, #2b4e9b) 1px 3px / 5px 1px no-repeat, linear-gradient(#2b4e9b, #2b4e9b) 3px 1px / 1px 5px no-repeat, #f6f6f6;
}

.exp.none {
  visibility: hidden;
}

/* Layout View */
.view {
  width: 1362px;
  margin: 1px 0 0 4px;
  display: flex;
  flex-direction: column;
  border-left: 2px solid #777;
  border-top: 2px solid #777;
  background: #f0f0f0;
}

.ruler-top {
  height: 18px;
  padding: 1px 0 0 584px;
}

.ruler-box {
  display: flex;
  border: 1px solid #999;
  background: #fff;
  font-family: "Liberation Sans", sans-serif;
  font-size: 9px;
}

.ruler-top .ruler-box {
  width: 166px;
  height: 16px;
  padding-left: 38px;
}

.ruler-top i {
  width: 40px;
  height: 10px;
  flex: none;
  margin-top: 4px;
  padding-left: 2px;
  line-height: 3px;
  border-left: 1px solid #000;
}

.ruler-top i:last-child {
  width: 1px;
  padding: 0;
}

.view-body {
  flex: 1;
  display: flex;
}

.ruler-left {
  width: 19px;
  padding: 372px 0 0 2px;
}

.ruler-left .ruler-box {
  width: 16px;
  height: 96px;
  flex-direction: column;
}

/* Turned upside down so that the numbers read from bottom to top */
.ruler-left i {
  height: 40px;
  margin-left: 3px;
  padding-top: 3px;
  border-top: 1px solid #000;
  line-height: 3px;
  writing-mode: vertical-rl;
  transform: rotate(180deg);
}

.ruler-left i:first-child {
  height: 17px;
}

.canvas {
  width: 1320px;
  background: #fff;
  border: 2px solid #777;
  border-right: 1px solid #ddd;
  border-bottom: 1px solid #ddd;
  position: relative;
}

.sheet {
  position: absolute;
  left: 509px;
  top: 321px;
}

.vscroll {
  width: 18px;
  margin-left: 1px;
  display: flex;
  flex-direction: column;
  align-items: center;
  margin-top: -15px;
}

.vscroll .thumb {
  width: 16px;
  height: 798px;
  margin: 4px 0 6px;
  background: #cdcdcd;
}

.view-foot {
  height: 22px;
  display: flex;
  align-items: center;
}

.view-tabs {
  align-self: flex-start;
  margin-right: 10px;
}

.view-foot .thumb {
  width: 1228px;
  height: 18px;
  margin: 0 6px 0 4px;
  background: #cdcdcd;
}

/* Catalog */
.catalog {
  width: 250px;
  margin-left: 5px;
  display: flex;
  flex-direction: column;
}

.catalog-tools {
  height: 24px;
  display: flex;
  align-items: center;
  padding: 2px 0 0 6px;
  background: #fff;
  gap: 7px;
}

.catalog-tools .caret {
  margin: 0 3px 0 1px;
  border-top-color: #666;
}

.catalog-tools .sep {
  margin-left: -4px;
}

.chevrons {
  color: #336;
  margin: -10px 0 0 10px;
  font-size: 14px;
}

.location {
  height: 27px;
  display: flex;
  align-items: center;
  justify-content: space-between;
  padding: 0 4px 0 2px;
  font-size: 11px;
  border-top: 1px solid #ddd;
}

.location-box {
  width: 192px;
  height: 22px;
  display: flex;
  align-items: center;
  gap: 4px;
  padding: 0 4px 0 3px;
  background: #fff;
  border: 1px solid #777;
}

.location-box svg:last-child {
  margin-left: auto;
}

.catalog-frame {
  width: 246px;
  height: 776px;
  margin-left: 1px;
  display: flex;
  flex-direction: column;
  border: 1px solid #696969;
  border-right-color: #ddd;
  border-bottom-color: #ddd;
  background: #f0f0f0;
}

.catalog-tree {
  height: 754px;
  overflow: hidden;
  background: #fff;
}

.entry {
  height: 20px;
  display: flex;
  align-items: center;
  padding-left: 7px;
  white-space: nowrap;
}

.entry .ico {
  margin: 0 3px 0 6px;
}

.entry span {
  padding: 0 2px;
  line-height: 20px;
}

.entry:first-child span {
  background: #efefef;
}

.level1 {
  padding-left: 26px;
}

.catalog-scroll {
  height: 15px;
  display: flex;
  align-items: center;
  padding: 0 4px;
}

.catalog-scroll .thumb {
  width: 106px;
  height: 15px;
  margin: 0 auto 0 5px;
  background: #cdcdcd;
}

/* Status Bar */
footer {
  height: 25px;
  flex: none;
  position: relative;
  padding-left: 1639px;
  background: #f0f0f0;
}

.coords {
  line-height: 29px;
  white-space: nowrap;
}

.watermark {
  position: absolute;
  left: 1667px;
  top: -3px;
  font-family: "Liberation Sans", sans-serif;
  font-size: 15.8px;
  color: rgba(255, 255, 255, 0.75);
  text-shadow: 1px 1px 1px rgba(0, 0, 0, 0.18);
}
```
